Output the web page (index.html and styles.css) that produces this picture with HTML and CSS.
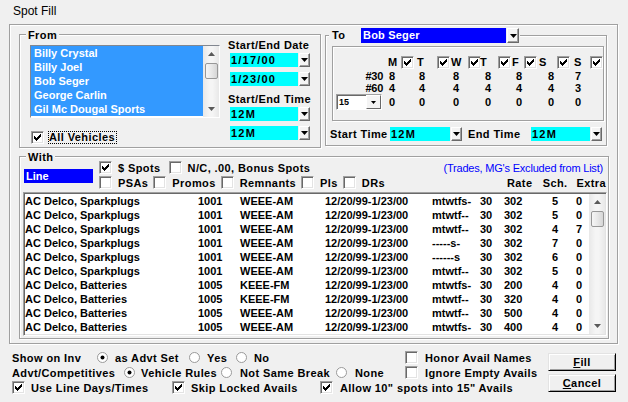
FILE: index.html
```html
<!DOCTYPE html>
<html>
<head>
<meta charset="utf-8">
<title>Spot Fill</title>
<link rel="stylesheet" href="styles.css">
</head>
<body>
<div class="dialog">
  <div class="title">Spot Fill</div>
  <div class="frame">
    <div class="toprow">
      <div class="group from">
        <div class="from-left">
          <div class="legend">From</div>
          <div class="listbox">
            <div class="items">
              <div class="item">Billy Crystal</div>
              <div class="item">Billy Joel</div>
              <div class="item">Bob Seger</div>
              <div class="item">George Carlin</div>
              <div class="item">Gil Mc Dougal Sports</div>
            </div>
            <div class="vscroll">
              <div class="sb-btn"><svg width="7" height="4" viewBox="0 0 7 4"><path d="M3.5 0L7 4H0z" fill="#5a5a5a"/></svg></div>
              <div class="sb-thumb"></div>
              <div class="sb-track"></div>
              <div class="sb-btn"><svg width="7" height="4" viewBox="0 0 7 4"><path d="M0 0h7L3.5 4z" fill="#5a5a5a"/></svg></div>
            </div>
          </div>
          <div class="allveh">
            <span class="cb"><svg width="7" height="7" viewBox="0 0 7 7"><path d="M0 2h1v1h1v1h1v-1h1v-1h1v-1h1v-1h1v3h-1v1h-1v1h-1v1h-1v1h-1v-1h-1v-1h-1v-1h-1z"/></svg></span>
            <span class="focus">All Vehicles</span>
          </div>
        </div>
        <div class="from-right">
          <div class="lbl">Start/End Date</div>
          <div class="combo first"><span class="cbox cyan date">1/17/00</span><span class="dd"><svg width="7" height="4" viewBox="0 0 7 4"><path d="M0 0h7L3.5 4z"/></svg></span></div>
          <div class="combo second"><span class="cbox cyan date">1/23/00</span><span class="dd"><svg width="7" height="4" viewBox="0 0 7 4"><path d="M0 0h7L3.5 4z"/></svg></span></div>
          <div class="lbl lbl2">Start/End Time</div>
          <div class="combo first"><span class="cbox cyan date">12M</span><span class="dd"><svg width="7" height="4" viewBox="0 0 7 4"><path d="M0 0h7L3.5 4z"/></svg></span></div>
          <div class="combo second"><span class="cbox cyan date">12M</span><span class="dd"><svg width="7" height="4" viewBox="0 0 7 4"><path d="M0 0h7L3.5 4z"/></svg></span></div>
        </div>
      </div>

      <div class="group to">
        <div class="to-legend">
          <span class="to-lbl">To</span>
          <span class="cbox blue">Bob Seger</span><span class="dd tall"><svg width="7" height="4" viewBox="0 0 7 4"><path d="M0 0h7L3.5 4z"/></svg></span>
        </div>
        <div class="panel">
          <div class="prow head">
            <span></span>
            <span>M</span><span class="cb"><svg width="7" height="7" viewBox="0 0 7 7"><path d="M0 2h1v1h1v1h1v-1h1v-1h1v-1h1v-1h1v3h-1v1h-1v1h-1v1h-1v1h-1v-1h-1v-1h-1v-1h-1z"/></svg></span>
            <span>T</span><span class="cb"><svg width="7" height="7" viewBox="0 0 7 7"><path d="M0 2h1v1h1v1h1v-1h1v-1h1v-1h1v-1h1v3h-1v1h-1v1h-1v1h-1v1h-1v-1h-1v-1h-1v-1h-1z"/></svg></span>
            <span>W</span><span class="cb"><svg width="7" height="7" viewBox="0 0 7 7"><path d="M0 2h1v1h1v1h1v-1h1v-1h1v-1h1v-1h1v3h-1v1h-1v1h-1v1h-1v1h-1v-1h-1v-1h-1v-1h-1z"/></svg></span>
            <span>T</span><span class="cb"><svg width="7" height="7" viewBox="0 0 7 7"><path d="M0 2h1v1h1v1h1v-1h1v-1h1v-1h1v-1h1v3h-1v1h-1v1h-1v1h-1v1h-1v-1h-1v-1h-1v-1h-1z"/></svg></span>
            <span>F</span><span class="cb"><svg width="7" height="7" viewBox="0 0 7 7"><path d="M0 2h1v1h1v1h1v-1h1v-1h1v-1h1v-1h1v3h-1v1h-1v1h-1v1h-1v1h-1v-1h-1v-1h-1v-1h-1z"/></svg></span>
            <span>S</span><span class="cb"><svg width="7" height="7" viewBox="0 0 7 7"><path d="M0 2h1v1h1v1h1v-1h1v-1h1v-1h1v-1h1v3h-1v1h-1v1h-1v1h-1v1h-1v-1h-1v-1h-1v-1h-1z"/></svg></span>
            <span>S</span><span class="cb"><svg width="7" height="7" viewBox="0 0 7 7"><path d="M0 2h1v1h1v1h1v-1h1v-1h1v-1h1v-1h1v3h-1v1h-1v1h-1v1h-1v1h-1v-1h-1v-1h-1v-1h-1z"/></svg></span>
          </div>
          <div class="prow r1">
            <span class="rlbl">#30</span>
            <span class="v o1">8</span><span class="v o2">8</span><span class="v o2">8</span><span class="v o5">8</span><span class="v o4">8</span><span class="v o9">8</span><span class="v o1">7</span>
          </div>
          <div class="prow r2">
            <span class="rlbl">#60</span>
            <span class="v o1">4</span><span class="v o2">4</span><span class="v o2">4</span><span class="v o5">4</span><span class="v o4">4</span><span class="v o9">4</span><span class="v o1">3</span>
          </div>
          <div class="prow r3">
            <span class="c15"><span class="c15-val">15</span><span class="c15-btn"><svg width="5" height="3" viewBox="0 0 5 3"><path d="M0 0h5L2.5 3z"/></svg></span></span>
            <span class="v o1">0</span><span class="v o2">0</span><span class="v o2">0</span><span class="v o5">0</span><span class="v o4">0</span><span class="v o9">0</span><span class="v o1">0</span>
          </div>
        </div>
        <div class="timerow">
          <span class="tl1">Start Time</span>
          <span class="cbox cyan date tw">12M</span><span class="dd"><svg width="7" height="4" viewBox="0 0 7 4"><path d="M0 0h7L3.5 4z"/></svg></span>
          <span class="tl2">End Time</span>
          <span class="cbox cyan date tw2">12M</span><span class="dd"><svg width="7" height="4" viewBox="0 0 7 4"><path d="M0 0h7L3.5 4z"/></svg></span>
        </div>
      </div>
    </div>

    <div class="group with">
      <div class="with-head">
        <div class="with-left">
          <div class="legend">With</div>
          <div class="linebox">Line</div>
        </div>
        <div class="with-opts">
          <div class="orow o-r1">
            <span class="opt spots"><span class="cb"><svg width="7" height="7" viewBox="0 0 7 7"><path d="M0 2h1v1h1v1h1v-1h1v-1h1v-1h1v-1h1v3h-1v1h-1v1h-1v1h-1v1h-1v-1h-1v-1h-1v-1h-1z"/></svg></span><span class="otx">$ Spots</span></span>
            <span class="opt"><span class="cb"></span><span class="otx">N/C, .00, Bonus Spots</span></span>
            <span class="trades">(Trades, MG's Excluded from List)</span>
          </div>
          <div class="orow o-r2">
            <span class="opt"><span class="cb"></span><span class="otx">PSAs</span></span>
            <span class="opt"><span class="cb"></span><span class="otx">Promos</span></span>
            <span class="opt"><span class="cb"></span><span class="otx">Remnants</span></span>
            <span class="opt"><span class="cb"></span><span class="otx">Pls</span></span>
            <span class="opt"><span class="cb"></span><span class="otx">DRs</span></span>
            <span class="colhead"><span class="h-rate">Rate</span><span class="h-sch">Sch.</span><span class="h-extra">Extra</span></span>
          </div>
        </div>
      </div>
      <div class="list">
        <div class="rows">
          <div class="lrow"><span>AC Delco, Sparkplugs</span><span>1001</span><span>WEEE-AM</span><span>12/20/99-1/23/00</span><span>mtwtfs-</span><span>30</span><span>302</span><span>5</span><span>0</span></div>
          <div class="lrow"><span>AC Delco, Sparkplugs</span><span>1001</span><span>WEEE-AM</span><span>12/20/99-1/23/00</span><span>mtwtf--</span><span>30</span><span>302</span><span>5</span><span>0</span></div>
          <div class="lrow"><span>AC Delco, Sparkplugs</span><span>1001</span><span>WEEE-AM</span><span>12/20/99-1/23/00</span><span>mtwtf--</span><span>30</span><span>302</span><span>4</span><span>7</span></div>
          <div class="lrow"><span>AC Delco, Sparkplugs</span><span>1001</span><span>WEEE-AM</span><span>12/20/99-1/23/00</span><span>-----s-</span><span>30</span><span>302</span><span>7</span><span>0</span></div>
          <div class="lrow"><span>AC Delco, Sparkplugs</span><span>1001</span><span>WEEE-AM</span><span>12/20/99-1/23/00</span><span>------s</span><span>30</span><span>302</span><span>6</span><span>0</span></div>
          <div class="lrow"><span>AC Delco, Sparkplugs</span><span>1001</span><span>WEEE-AM</span><span>12/20/99-1/23/00</span><span>mtwtf--</span><span>30</span><span>302</span><span>5</span><span>0</span></div>
          <div class="lrow"><span>AC Delco, Batteries</span><span>1005</span><span>KEEE-FM</span><span>12/20/99-1/23/00</span><span>mtwtfs-</span><span>30</span><span>200</span><span>4</span><span>0</span></div>
          <div class="lrow"><span>AC Delco, Batteries</span><span>1005</span><span>KEEE-FM</span><span>12/20/99-1/23/00</span><span>mtwtf--</span><span>30</span><span>320</span><span>4</span><span>0</span></div>
          <div class="lrow"><span>AC Delco, Batteries</span><span>1005</span><span>WEEE-AM</span><span>12/20/99-1/23/00</span><span>mtwtf--</span><span>30</span><span>500</span><span>4</span><span>0</span></div>
          <div class="lrow"><span>AC Delco, Batteries</span><span>1005</span><span>WEEE-AM</span><span>12/20/99-1/23/00</span><span>mtwtfs-</span><span>30</span><span>400</span><span>4</span><span>0</span></div>
        </div>
        <div class="vscroll lsb">
          <div class="sb-btn"><svg width="7" height="4" viewBox="0 0 7 4"><path d="M3.5 0L7 4H0z" fill="#5a5a5a"/></svg></div>
          <div class="sb-thumb"></div>
          <div class="sb-track"></div>
          <div class="sb-btn"><svg width="7" height="4" viewBox="0 0 7 4"><path d="M0 0h7L3.5 4z" fill="#5a5a5a"/></svg></div>
        </div>
      </div>
    </div>
  </div>

  <div class="bottom">
    <div class="bopts">
      <div class="brow">
        <div class="bl">
          <span class="w84">Show on Inv</span>
          <span class="rb"><svg width="13" height="13" viewBox="0 0 13 13"><circle cx="6.5" cy="6.5" r="5" fill="#fff" stroke="#9a9a9a"/><circle cx="6.5" cy="6.5" r="2" fill="#000"/></svg></span>
          <span class="rt w73">as Advt Set</span>
          <span class="rb"><svg width="13" height="13" viewBox="0 0 13 13"><circle cx="6.5" cy="6.5" r="5" fill="#fff" stroke="#9a9a9a"/></svg></span>
          <span class="rt w28">Yes</span>
          <span class="rb"><svg width="13" height="13" viewBox="0 0 13 13"><circle cx="6.5" cy="6.5" r="5" fill="#fff" stroke="#9a9a9a"/></svg></span>
          <span class="rt">No</span>
        </div>
        <span class="cb"></span><span class="ct7">Honor Avail Names</span>
      </div>
      <div class="brow">
        <div class="bl">
          <span class="w111">Advt/Competitives</span>
          <span class="rb"><svg width="13" height="13" viewBox="0 0 13 13"><circle cx="6.5" cy="6.5" r="5" fill="#fff" stroke="#9a9a9a"/><circle cx="6.5" cy="6.5" r="2" fill="#000"/></svg></span>
          <span class="rt5 w79">Vehicle Rules</span>
          <span class="rb"><svg width="13" height="13" viewBox="0 0 13 13"><circle cx="6.5" cy="6.5" r="5" fill="#fff" stroke="#9a9a9a"/></svg></span>
          <span class="ct7 w95">Not Same Break</span>
          <span class="rb"><svg width="13" height="13" viewBox="0 0 13 13"><circle cx="6.5" cy="6.5" r="5" fill="#fff" stroke="#9a9a9a"/></svg></span>
          <span class="ct7">None</span>
        </div>
        <span class="cb"></span><span class="ct7">Ignore Empty Avails</span>
      </div>
      <div class="brow b3">
        <span class="cb"><svg width="7" height="7" viewBox="0 0 7 7"><path d="M0 2h1v1h1v1h1v-1h1v-1h1v-1h1v-1h1v3h-1v1h-1v1h-1v1h-1v1h-1v-1h-1v-1h-1v-1h-1z"/></svg></span><span class="rt w141">Use Line Days/Times</span>
        <span class="cb"><svg width="7" height="7" viewBox="0 0 7 7"><path d="M0 2h1v1h1v1h1v-1h1v-1h1v-1h1v-1h1v3h-1v1h-1v1h-1v1h-1v1h-1v-1h-1v-1h-1v-1h-1z"/></svg></span><span class="rt w129">Skip Locked Avails</span>
        <span class="cb"><svg width="7" height="7" viewBox="0 0 7 7"><path d="M0 2h1v1h1v1h1v-1h1v-1h1v-1h1v-1h1v3h-1v1h-1v1h-1v1h-1v1h-1v-1h-1v-1h-1v-1h-1z"/></svg></span><span class="ct7">Allow 10" spots into 15" Avails</span>
      </div>
    </div>
    <div class="btns">
      <div class="btn"><span><u>F</u>ill</span></div>
      <div class="btn cancel"><span><u>C</u>ancel</span></div>
    </div>
  </div>
</div>
</body>
</html>
```

FILE: styles.css
```css
* { box-sizing: border-box; }
html, body { margin: 0; padding: 0; }
body {
  width: 628px; height: 402px; overflow: hidden;
  background: #f0f0f0;
  font-family: "Liberation Sans", Arial, sans-serif;
  font-size: 11px; font-weight: bold; color: #000;
  letter-spacing: 0.4px;
}
.dialog { width: 628px; height: 402px; background: #f0f0f0; }
.title {
  height: 24px; padding: 4px 0 0 13px;
  font-size: 12px; font-weight: normal; line-height: 15px; letter-spacing: 0;
}
.frame {
  margin-left: 9px; width: 609px; height: 320px;
  border: 1px solid #a0a0a0;
  box-shadow: inset 1px 1px 0 #fff, 1px 1px 0 #fff;
  padding: 9px 0 0 9px;
}
.toprow { display: flex; align-items: flex-start; }
.group {
  border: 1px solid #a0a0a0;
  box-shadow: inset 1px 1px 0 #fff, 1px 1px 0 #fff;
}
.legend { background: #f0f0f0; line-height: 12px; height: 12px; padding: 0 2px; }

/* checkbox */
.cb {
  width: 13px; height: 13px; flex: none;
  background: #fff;
  border: 1px solid; border-color: #a0a0a0 #fff #fff #a0a0a0;
  box-shadow: inset 1px 1px 0 #696969, inset -1px -1px 0 #e3e3e3;
  display: inline-flex; align-items: center; justify-content: center;
}
.cb svg { display: block; }
.rb { width: 13px; height: 13px; flex: none; }
.rb svg { display: block; }

/* dropdown button */
.dd {
  width: 11px; height: 14px; margin-left: 1px; flex: none;
  background: #f4f4f4;
  border: 1px solid; border-color: #fff #696969 #696969 #fff;
  box-shadow: inset -1px -1px 0 #a0a0a0;
  display: inline-flex; align-items: center; justify-content: center;
}
.dd svg { display: block; }
.dd.tall { width: 12px; height: 15px; }

.cbox { display: block; height: 14px; line-height: 14px; padding-left: 1px; white-space: nowrap; }
.cyan { background: #00ffff; }
.date { letter-spacing: 1.2px; }
.blue { background: #0000ff; color: #fff; width: 145px; height: 15px; line-height: 15px; padding-left: 2px; letter-spacing: 0.2px; }

/* From group */
.from { width: 302px; height: 114px; display: flex; }
.from-left { display: flex; flex-direction: column; align-items: flex-start; margin-left: 6px; }
.from .legend { margin-top: -6px; }
.listbox {
  margin: 4px 0 0 4px; width: 190px; height: 73px; display: flex;
  border: 1px solid; border-color: #828790 #fff #fff #828790;
  background: #fff;
}
.items { width: 172px; padding-bottom: 1px; }
.item {
  height: 14px; line-height: 14px; background: #3399ff; color: #fff;
  padding-left: 3px; letter-spacing: 0; white-space: nowrap;
}
.vscroll {
  width: 16px; display: flex; flex-direction: column;
  background: linear-gradient(to right, #e8e8e8, #f5f5f5 40%, #f5f5f5 60%, #e8e8e8);
}
.sb-btn { height: 16px; display: flex; align-items: center; justify-content: center; flex: none; }
.sb-btn svg { display: block; }
.sb-thumb {
  height: 16px; margin: 1px 1px 0 2px; flex: none;
  border: 1px solid #979797; border-radius: 2px;
  background: linear-gradient(to right, #f6f6f6, #e8e8e8 50%, #d6d6d6);
}
.sb-track { flex: 1; }
.allveh { display: flex; align-items: center; height: 15px; margin: 12px 0 0 5px; }
.focus {
  margin-left: 4px; border: 1px dotted #000; line-height: 11px; height: 13px;
  padding: 0 1px 0 0;
}
.from-right { display: flex; flex-direction: column; align-items: flex-start; margin: 4px 0 0 8px; }
.lbl { line-height: 12px; height: 12px; white-space: nowrap; }
.lbl2 { margin-top: 7px; }
.combo { display: flex; margin-left: 2px; }
.combo.first { margin-top: 2px; }
.combo.second { margin-top: 5px; }
.combo .cbox { width: 68px; }

/* To group */
.to {
  width: 282px; height: 111px; margin: 1px 0 0 4px;
  display: flex; flex-direction: column; align-items: flex-start;
}
.to-legend {
  display: flex; align-items: center; height: 15px;
  margin: -8px 0 0 3px; padding: 0 1px 0 3px; background: #f0f0f0;
}
.to-lbl { width: 29px; line-height: 15px; }
.panel {
  margin: 3px 0 0 6px; width: 272px; height: 75px;
  border: 1px solid #a0a0a0;
  box-shadow: inset 1px 1px 0 #fff, 1px 1px 0 #fff;
  padding-top: 8px;
}
.prow {
  display: grid;
  grid-template-columns: 55px 13px 16px 20px 14px 17px 12px 18px 14px 12px 15px 18px 17px 16px 13px;
  align-items: center; letter-spacing: 0;
}
.prow.head { height: 14px; }
.prow.r1 { height: 13px; }
.prow.r2 { height: 12px; }
.prow.r3 { height: 13px; }
.rlbl { text-align: right; padding-right: 5px; letter-spacing: -0.3px; }
.v { grid-column: span 2; }
.o1 { padding-left: 1px; }
.o2 { padding-left: 2px; }
.o4 { padding-left: 4px; }
.o5 { padding-left: 5px; }
.o9 { padding-left: 9px; }
.c15 {
  align-self: start; display: flex; width: 46px; height: 16px; margin-left: 3px;
  background: #fff;
  border: 1px solid; border-color: #a0a0a0 #fff #fff #a0a0a0;
  box-shadow: inset 1px 1px 0 #696969;
}
.c15-val { flex: 1; font-size: 9px; line-height: 14px; padding-left: 2px; }
.c15-btn {
  width: 15px; height: 14px;
  background: #f4f4f4;
  border: 1px solid; border-color: #fff #696969 #696969 #fff;
  display: flex; align-items: center; justify-content: center;
}
.c15-btn svg { display: block; }
.timerow { display: flex; align-items: center; height: 14px; margin: 6px 0 0 4px; white-space: nowrap; }
.tl1 { width: 60px; }
.tw { width: 60px; }
.tl2 { width: 63px; margin-left: 6px; }
.tw2 { width: 59px; }

/* With group */
.with { width: 590px; height: 183px; margin-top: 8px; }
.with-head { display: flex; }
.with-left { display: flex; flex-direction: column; align-items: flex-start; margin-left: 4px; }
.with .legend { margin: -6px 0 0 2px; }
.linebox {
  margin-top: 6px; width: 69px; height: 14px; line-height: 14px;
  background: #0000ff; color: #fff; padding-left: 2px; letter-spacing: 0;
}
.with-opts { flex: 1; margin: 4px 0 0 6px; padding-right: 5px; }
.orow { display: flex; align-items: center; height: 13px; white-space: nowrap; }
.o-r1 { gap: 8px; }
.o-r2 { gap: 5px; margin-top: 2px; }
.opt { display: flex; align-items: center; }
.otx { margin-left: 6px; }
.trades {
  margin-left: auto; font-weight: normal; color: #0000ff; letter-spacing: -0.2px;
}
.colhead { margin-left: auto; margin-right: -3px; display: flex; width: 100px; padding-left: 1px; }
.h-rate { width: 36px; }
.h-sch { width: 34px; }
.list {
  margin: 3px 0 0 3px; width: 584px; height: 144px; display: flex;
  border: 1px solid; border-color: #a0a0a0 #fff #fff #a0a0a0;
  box-shadow: inset 1px 1px 0 #696969, inset -1px -1px 0 #e3e3e3;
  padding: 1px;
}
.rows { flex: 1; background: #fff; letter-spacing: 0; }
.lrow {
  display: grid;
  grid-template-columns: 173px 42px 85px 107px 48px 24px 48px 24px 1fr;
  height: 14px; line-height: 14px; padding-left: 0; white-space: nowrap;
}
.lsb { width: 16px; }

/* Bottom */
.bottom { display: flex; margin-top: 6px; }
.bopts { flex: 1; }
.brow { display: flex; align-items: center; height: 15px; white-space: nowrap; }
.bl { width: 405px; display: flex; align-items: center; padding-left: 12px; }
.w84 { width: 84px; }
.w111 { width: 111px; }
.rt { margin-left: 6px; }
.rt5 { margin-left: 5px; }
.ct7 { margin-left: 7px; }
.w73 { width: 73px; }
.w28 { width: 28px; }
.w79 { width: 79px; }
.w95 { width: 95px; }
.w141 { width: 141px; }
.w129 { width: 129px; }
.b3 { padding-left: 12px; }
.btns { width: 68px; margin: 3px 12px 0 0; }
.btn {
  height: 18px; display: flex; align-items: center; justify-content: center;
  background: #f0f0f0;
  border: 1px solid; border-color: #e3e3e3 #000 #000 #e3e3e3;
  box-shadow: inset 1px 1px 0 #fff, inset -1px -1px 0 #a0a0a0;
}
.btn u { text-decoration: underline; text-underline-offset: 1px; }
.cancel { margin-top: 3px; }
```
